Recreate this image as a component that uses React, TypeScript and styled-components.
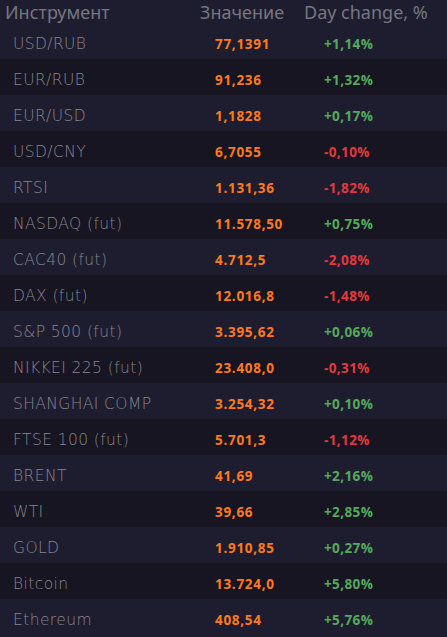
import React from "react"
import styled, {createGlobalStyle} from 'styled-components'

const GlobalStyle = createGlobalStyle`
  html, body {
    margin: 0;
    padding: 0;
    background: #1e1d2f;
  }
`;

const Table = styled.div`
  width: 447px;
  display: flex;
  flex-direction: column;
  background: #1e1d2f;
`;

const HeaderRow = styled.div`
  height: 23px;
  display: grid;
  grid-template-columns: 195px 104px 1fr;
  align-items: center;
  padding-left: 5px;
  font-family: "Noto Sans", sans-serif;
  font-size: 18px;
  color: #77767f;
  white-space: nowrap;
  line-height: 1;
`;

const Row = styled.div<{ $dark: boolean }>`
  height: 36px;
  box-sizing: border-box;
  padding-top: 6px;
  display: grid;
  grid-template-columns: 202px 109px 1fr;
  align-items: center;
  padding-left: 13px;
  background: ${p => p.$dark ? '#161521' : '#1e1d2f'};
`;

const Name = styled.span`
  font-family: "DejaVu Sans", sans-serif;
  font-weight: 200;
  font-size: 15.5px;
  letter-spacing: 0.4px;
  color: #87868f;
  white-space: nowrap;
`;

const Value = styled.span`
  font-family: "Open Sans", sans-serif;
  font-weight: 700;
  font-size: 13.5px;
  letter-spacing: 0.7px;
  color: #ff7a1c;
`;

const Change = styled.span<{ $up: boolean }>`
  font-family: "Open Sans", sans-serif;
  font-weight: 700;
  font-size: 13.5px;
  letter-spacing: 0.4px;
  color: ${p => p.$up ? '#55a95b' : '#e2393b'};
`;

const rows = [
    ["USD/RUB", "77,1391", "+1,14%"],
    ["EUR/RUB", "91,236", "+1,32%"],
    ["EUR/USD", "1,1828", "+0,17%"],
    ["USD/CNY", "6,7055", "-0,10%"],
    ["RTSI", "1.131,36", "-1,82%"],
    ["NASDAQ (fut)", "11.578,50", "+0,75%"],
    ["CAC40 (fut)", "4.712,5", "-2,08%"],
    ["DAX (fut)", "12.016,8", "-1,48%"],
    ["S&P 500 (fut)", "3.395,62", "+0,06%"],
    ["NIKKEI 225 (fut)", "23.408,0", "-0,31%"],
    ["SHANGHAI COMP", "3.254,32", "+0,10%"],
    ["FTSE 100 (fut)", "5.701,3", "-1,12%"],
    ["BRENT", "41,69", "+2,16%"],
    ["WTI", "39,66", "+2,85%"],
    ["GOLD", "1.910,85", "+0,27%"],
    ["Bitcoin", "13.724,0", "+5,80%"],
    ["Ethereum", "408,54", "+5,76%"],
];

const App = () => {
    return (
        <>
            <GlobalStyle/>
            <Table>
                <HeaderRow>
                    <span>Инструмент</span>
                    <span>Значение</span>
                    <span>Day change, %</span>
                </HeaderRow>
                {rows.map((r, i) => (
                    <Row key={`row-${i}`} $dark={i % 2 === 1}>
                        <Name>{r[0]}</Name>
                        <Value>{r[1]}</Value>
                        <Change $up={!r[2].startsWith("-")}>{r[2]}</Change>
                    </Row>
                ))}
            </Table>
        </>
    )
};

export default App
